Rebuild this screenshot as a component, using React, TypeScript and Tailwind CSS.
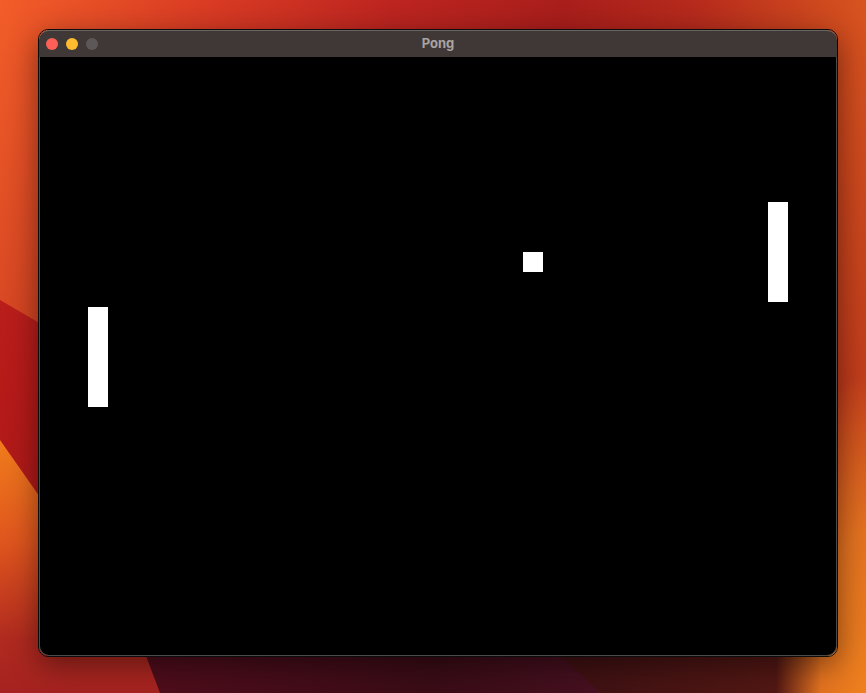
export default function App() {
    // game objects, positions inside the 800x600 canvas
    const leftPaddle = { x: 48, y: 250 };
    const rightPaddle = { x: 728, y: 145 };
    const ball = { x: 483, y: 195 };

    return (
        <div className="relative w-[866px] h-[693px] overflow-hidden bg-[linear-gradient(90deg,#f25d29_0%,#d83a23_25%,#bd2520_45%,#a91e1b_65%,#b52a1c_80%,#d8541f_100%)] font-['Inter','Liberation_Sans',sans-serif]">
            {/* Wallpaper shapes */}
            <div className="absolute inset-0 bg-[linear-gradient(180deg,transparent_0%,rgba(150,20,20,0.35)_55%,transparent_100%)]" />
            <div className="absolute inset-0 [clip-path:polygon(0_300px,60px_335px,60px_693px,0_693px)] bg-[linear-gradient(180deg,#c82a22_0px,#b51a19_400px,#a01818_693px)]" />
            <div className="absolute inset-0 [clip-path:polygon(0_440px,70px_540px,150px_657px,170px_693px,0_693px)] bg-[linear-gradient(180deg,#f07c1c_440px,#e0561e_540px,#b02a1f_640px,#a52220_693px)]" />
            <div className="absolute inset-0 [clip-path:polygon(140px_640px,560px_640px,600px_693px,160px_693px)] bg-[linear-gradient(90deg,#5a0d1e_0%,#3a0c16_50%,#5a1630_100%)]" />
            <div className="absolute inset-0 [clip-path:polygon(545px_640px,820px_640px,820px_693px,600px_693px)] bg-[linear-gradient(90deg,#2a0b0e_0%,#3a0f12_60%,#5a1a14_100%)]" />
            <div className="absolute inset-0 bg-[radial-gradient(ellipse_90px_320px_at_100%_100%,#ee801e_0%,#e27220_50%,transparent_100%)]" />

            {/* Window */}
            <div className="relative ml-[38px] mt-[29px] w-[800px] h-[628px] flex flex-col rounded-[10px] overflow-hidden border border-[#0c0c0c] shadow-[0_8px_30px_rgba(0,0,0,0.45)]">
                <div className="relative h-[27px] shrink-0 flex items-center bg-[#3f3837] border-t border-[#6a6462] rounded-t-[10px]">
                    <div className="flex items-center gap-2 pl-[7px]">
                        <span className="w-3 h-3 rounded-full bg-[#fe5f57]" />
                        <span className="w-3 h-3 rounded-full bg-[#febc2e]" />
                        <span className="w-3 h-3 rounded-full bg-[#5d5857]" />
                    </div>
                    <div className="absolute inset-0 flex items-center justify-center text-[13px] font-bold text-[#aaa4a3]">
                        Pong
                    </div>
                </div>
                <div className="relative flex-1 bg-black border-b border-x border-[#4a4a4a] rounded-b-[10px]">
                    <div className="absolute w-5 h-[100px] bg-white" style={{ left: leftPaddle.x, top: leftPaddle.y }} />
                    <div className="absolute w-5 h-[100px] bg-white" style={{ left: rightPaddle.x, top: rightPaddle.y }} />
                    <div className="absolute w-5 h-5 bg-white" style={{ left: ball.x, top: ball.y }} />
                </div>
            </div>
        </div>
    );
}
